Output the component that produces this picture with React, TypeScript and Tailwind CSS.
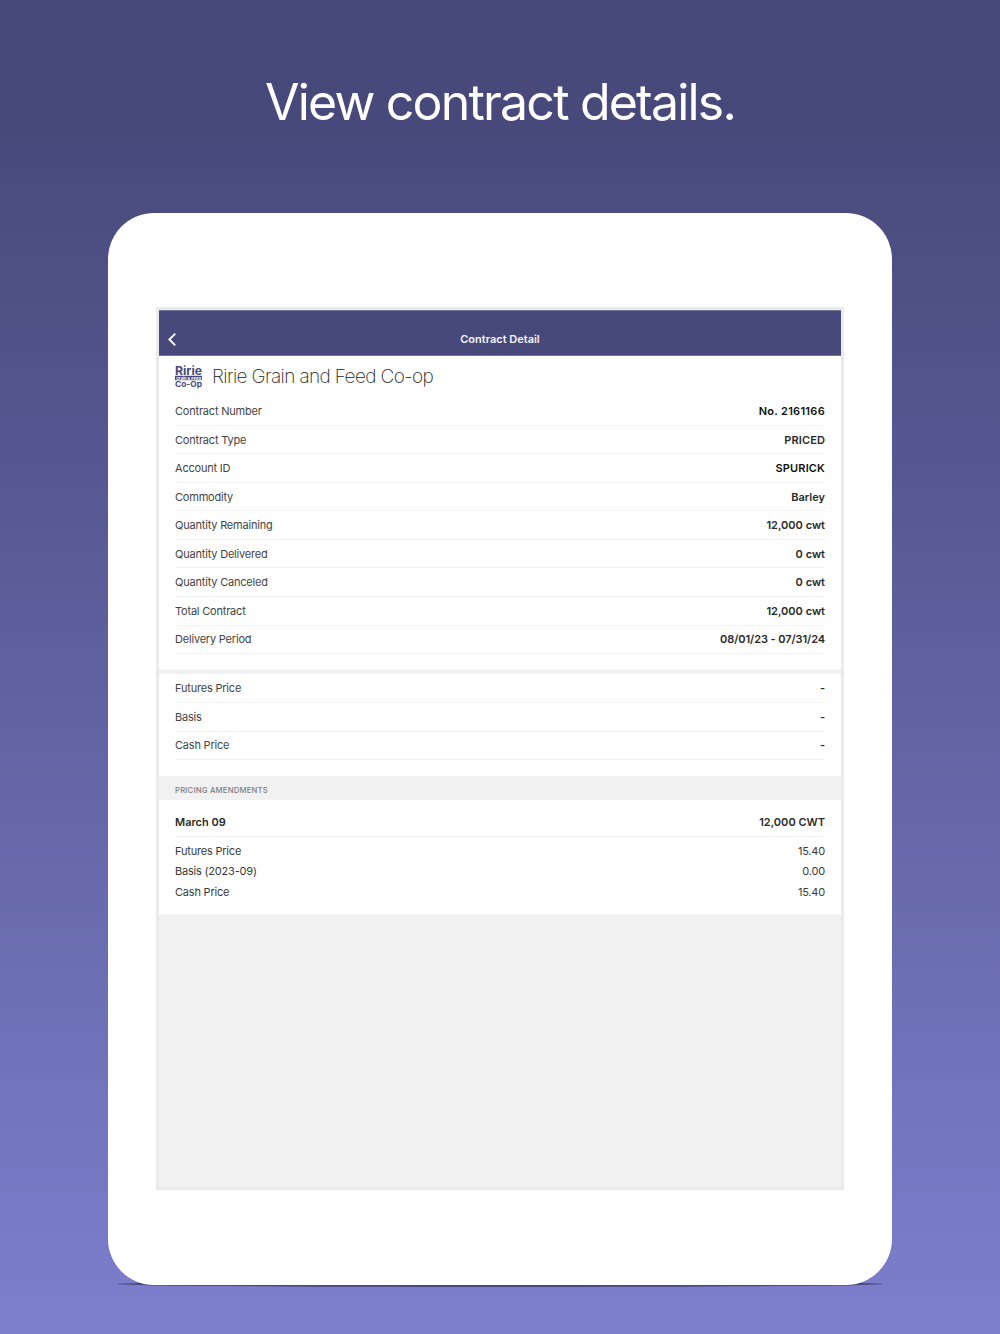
import type { ReactNode } from "react";
import clsx from "clsx";

interface Detail {
  label: string;
  value: string;
  valueClass?: string;
}

const contractDetails: Detail[] = [
  { label: "Contract Number", value: "No. 2161166", valueClass: "text-[#111] tracking-[0.3px]" },
  { label: "Contract Type", value: "PRICED", valueClass: "text-[#2a2a2a] tracking-[0.1px]" },
  { label: "Account ID", value: "SPURICK", valueClass: "text-[#111] tracking-[0.15px]" },
  { label: "Commodity", value: "Barley" },
  { label: "Quantity Remaining", value: "12,000 cwt" },
  { label: "Quantity Delivered", value: "0 cwt" },
  { label: "Quantity Canceled", value: "0 cwt" },
  { label: "Total Contract", value: "12,000 cwt" },
  {
    label: "Delivery Period",
    value: "08/01/23 - 07/31/24",
    valueClass: "text-[#2a2a2a] tracking-[-0.08px]",
  },
];

const priceDetails: Detail[] = [
  { label: "Futures Price", value: "-" },
  { label: "Basis", value: "-" },
  { label: "Cash Price", value: "-" },
];

const amendmentPrices: Detail[] = [
  { label: "Futures Price", value: "15.40" },
  { label: "Basis (2023-09)", value: "0.00" },
  { label: "Cash Price", value: "15.40" },
];

function DetailRow({ label, value, valueClass }: Detail) {
  return (
    <div className="flex h-[28.57px] items-center justify-between border-b border-[#f3f3f3] pt-[0.4px]">
      <dt className="tracking-[-0.2px] text-[#444]">{label}</dt>
      <dd className={clsx("font-semibold", valueClass ?? "text-[#2a2a2a]")}>{value}</dd>
    </div>
  );
}

function DetailList({ children }: { children: ReactNode }) {
  return <dl className="text-[11px] leading-4">{children}</dl>;
}

function CoopLogo() {
  return (
    <svg className="h-[26px] w-7 shrink-0" viewBox="0 0 28 26" aria-label="Ririe Grain & Feed Co-Op">
      <g fontFamily="Inter, sans-serif" fontWeight="700" fill="#48497b">
        <text x="0" y="10.6" fontSize="12" textLength="27" lengthAdjust="spacingAndGlyphs">
          Ririe
        </text>
        <rect x="0" y="11.8" width="27" height="4.4" />
        <text x="1" y="15.5" fontSize="4" fill="#fff" textLength="25" lengthAdjust="spacingAndGlyphs">
          Grain &amp; Feed
        </text>
        <text x="0" y="23" fontSize="8" textLength="27" lengthAdjust="spacingAndGlyphs">
          Co-Op
        </text>
      </g>
    </svg>
  );
}

function NavBar() {
  return (
    <header className="relative flex h-[46px] items-end justify-center border-t border-b border-t-[#77779b] border-b-[#77779b] bg-[#48497b] pb-2">
      <svg
        className="absolute bottom-[9px] left-[9px] h-[13px] w-2"
        viewBox="0 0 8 13"
        fill="none"
        stroke="#fff"
        strokeWidth="1.9"
      >
        <path d="M7.2 0.7 1.4 6.5l5.8 5.8" />
      </svg>
      <h2 className="text-[11px] leading-4 font-semibold text-[#f4f4f8]">Contract Detail</h2>
    </header>
  );
}

function ContractScreen() {
  return (
    <div className="h-[883px] w-[688px] border-[3px] border-[#ebebeb] bg-[#f1f1f1]">
      <NavBar />

      <section className="h-[313px] bg-white px-4">
        <div className="flex h-[41px] items-center gap-[9px]">
          <CoopLogo />
          <h3 className="text-[19px] leading-6 font-extralight tracking-[-0.62px] text-[#222]">
            Ririe Grain and Feed Co-op
          </h3>
        </div>
        <DetailList>
          {contractDetails.map((detail) => (
            <DetailRow key={detail.label} {...detail} />
          ))}
        </DetailList>
      </section>

      <section className="mt-[5px] h-[102px] bg-white px-4 pt-[0.4px]">
        <DetailList>
          {priceDetails.map((detail) => (
            <DetailRow key={detail.label} {...detail} />
          ))}
        </DetailList>
      </section>

      <h4 className="flex h-6 items-end px-4 pb-[3px] text-[7.7px] leading-3 font-medium tracking-[0.2px] text-[#7d7d7d]">
        PRICING AMENDMENTS
      </h4>

      <section className="h-[114px] bg-white px-4 pt-2 text-[11px] leading-4">
        <div className="flex h-[29px] items-center justify-between border-b border-[#f3f3f3] font-semibold text-[#2a2a2a]">
          <span>March 09</span>
          <span>12,000 CWT</span>
        </div>
        <dl className="pt-[3.2px] tracking-[-0.2px] text-[#3a3a3a]">
          {amendmentPrices.map(({ label, value }) => (
            <div key={label} className="flex h-[20.8px] items-center justify-between">
              <dt>{label}</dt>
              <dd>{value}</dd>
            </div>
          ))}
        </dl>
      </section>
    </div>
  );
}

export default function App() {
  return (
    <main className="flex h-[1334px] w-[1000px] flex-col items-center overflow-hidden bg-linear-to-b from-[#48497b] from-10% to-[#7d7fcd] font-['Inter',sans-serif]">
      <h1 className="mt-[72px] h-[60px] text-[50px] leading-[60px] font-normal tracking-[-1.8px] whitespace-nowrap text-white">
        View contract details.
      </h1>

      <div className="relative mt-[81px] h-[1072px] w-[784px] shrink-0">
        {/* thin contact shadow under the tablet */}
        <div className="absolute bottom-[-2px] left-[9px] h-[6px] w-[766px] rounded-[50%] bg-[#48497b]" />
        <div className="relative flex h-full justify-center rounded-[46px] bg-white pt-[94px]">
          <ContractScreen />
        </div>
      </div>
    </main>
  );
}
